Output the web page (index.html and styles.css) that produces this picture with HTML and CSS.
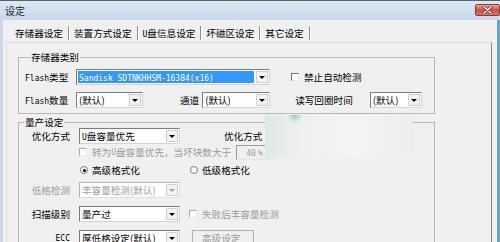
FILE: index.html
```html
<!DOCTYPE html>
<html lang="zh-CN">
<head>
    <meta charset="UTF-8">
    <title>设定</title>
    <link rel="stylesheet" href="styles.css">
</head>
<body>
<div class="window">
    <div class="titlebar">
        <span class="title">设定</span>
        <span class="close-btn">
            <svg width="11" height="8" viewBox="0 0 11 8">
                <path d="M2 1 L9 7 M9 1 L2 7" stroke="#7a2a22" stroke-width="3" stroke-linecap="round"/>
                <path d="M2 1 L9 7 M9 1 L2 7" stroke="#fff" stroke-width="1.6" stroke-linecap="round"/>
            </svg>
        </span>
    </div>
    <div class="client">
        <div class="tabs">
            <span class="tab active">存储器设定</span>
            <span class="tab">装置方式设定</span>
            <span class="tab"><span class="en">U</span>盘信息设定</span>
            <span class="tab">坏磁区设定</span>
            <span class="tab">其它设定</span>
        </div>
        <div class="panel">
            <fieldset class="group group-storage">
                <legend>存储器类别</legend>
                <div class="row row-first">
                    <span class="lbl"><span class="en">Flash</span>类型</span>
                    <div class="combo combo-type">
                        <span class="value selected"><span class="en">Sandisk SDTNKHHSM-16384(x16)</span></span>
                        <span class="arrow"></span>
                    </div>
                    <span class="check check-auto"><span class="box"></span>禁止自动检测</span>
                </div>
                <div class="row row-second">
                    <span class="lbl"><span class="en">Flash</span>数量</span>
                    <div class="combo combo-count">
                        <span class="value">(默认)</span>
                        <span class="arrow"></span>
                    </div>
                    <span class="lbl-channel">通道</span>
                    <div class="combo combo-channel">
                        <span class="value">(默认)</span>
                        <span class="arrow"></span>
                    </div>
                    <span class="lbl-loop">读写回圈时间</span>
                    <div class="combo combo-loop">
                        <span class="value">(默认)</span>
                        <span class="arrow"></span>
                    </div>
                </div>
            </fieldset>

            <fieldset class="group group-mass">
                <legend>量产设定</legend>
                <div class="row">
                    <span class="lbl-r">优化方式</span>
                    <div class="combo combo-std">
                        <span class="value"><span class="en">U</span>盘容量优先</span>
                        <span class="arrow"></span>
                    </div>
                    <span class="lbl-opt">优化方式</span>
                </div>
                <div class="row row-indent disabled">
                    <span class="check"><span class="box"></span>转为<span class="en">U</span>盘容量优先，当坏块数大于</span>
                    <span class="num-box"><span class="en">40</span> <span class="en">%</span></span>
                </div>
                <div class="row row-indent row-scan">
                    <span class="radio on"><span class="dot"></span>高级格式化</span>
                    <span class="radio radio-low"><span class="dot"></span>低级格式化</span>
                </div>
                <div class="row row-low disabled">
                    <span class="lbl-r">低格检测</span>
                    <div class="combo combo-std">
                        <span class="value">丰容量检测(默认)</span>
                        <span class="arrow"></span>
                    </div>
                </div>
                <div class="row row-level">
                    <span class="lbl-r">扫描级别</span>
                    <div class="combo combo-std">
                        <span class="value">量产过</span>
                        <span class="arrow"></span>
                    </div>
                    <span class="check check-fail disabled"><span class="box"></span>失败后丰容量检测</span>
                </div>
                <div class="row row-ecc">
                    <span class="lbl-r"><span class="en">ECC</span></span>
                    <div class="combo combo-std">
                        <span class="value">厚低格设定(默认)</span>
                        <span class="arrow"></span>
                    </div>
                    <span class="btn disabled">高级设定</span>
                </div>
            </fieldset>
        </div>
    </div>
    <div class="fade"></div>
</div>
</body>
</html>
```

FILE: styles.css
```css
body {
    margin: 0;
    padding: 0;
    width: 500px;
    height: 242px;
    overflow: hidden;
    background: #f0f0f0;
    font-family: "Noto Sans CJK SC", sans-serif;
    font-size: 9.6px;
    color: #000;
}
.window {
    position: relative;
    width: 500px;
    height: 242px;
    box-sizing: border-box;
    border-left: 3px solid #c9d9eb;
    border-right: 3px solid #6aa5c2;
    background: #f0f0f0;
}
.en {
    font-family: "DejaVu Sans Mono", monospace;
    font-size: 8px;
}
.titlebar {
    display: flex;
    align-items: center;
    justify-content: space-between;
    height: 20px;
    margin: 0 -3px;
    padding: 0 3px 0 5px;
    box-sizing: border-box;
    border-top: 1px solid #58626d;
    background: linear-gradient(#dbe7f4, #c6d8ec);
}
.title {
    font-size: 10px;
    color: #1c1c1c;
}
.close-btn {
    display: flex;
    align-items: center;
    justify-content: center;
    width: 25px;
    height: 12px;
    margin-top: -2px;
    margin-right: -3px;
    border: 1px solid #8a3b30;
    border-radius: 2px;
    background: linear-gradient(#e9a89c, #c9503f 50%, #d77663);
    box-sizing: border-box;
}
.tabs {
    display: flex;
    padding: 6px 0 2px 8px;
}
.tab {
    height: 14px;
    line-height: 14px;
    padding: 0 5px 0 4px;
    border-right: 1px solid #8e8e8e;
    box-shadow: 1px 0 0 #fff;
    margin-right: 1px;
}
.panel {
    margin: 0 5px 0 3px;
    height: 200px;
    border-top: 1px solid #dcdcdc;
    border-left: 1px solid #dcdcdc;
    border-right: 1px solid #8a8a8a;
    box-sizing: border-box;
}
.group {
    margin: 0 0 0 11px;
    padding: 0;
    width: 417px;
    box-sizing: border-box;
    border: 1px solid #b8b8b8;
    min-width: 0;
}
.group legend {
    margin-left: 5px;
    padding: 0 1px;
    line-height: 12px;
}
.group-storage {
    margin-top: 8px;
    padding: 0 0 5px 6px;
}
.group-mass {
    margin-top: 2px;
    height: 140px;
}
.row {
    display: flex;
    align-items: center;
    height: 16px;
    white-space: nowrap;
}
.row-first {
    margin-top: 6px;
}
.row-second {
    margin-top: 7px;
}
.lbl {
    width: 51px;
}
.lbl-r {
    width: 51px;
    margin-right: 9px;
    text-align: right;
}
.combo {
    display: flex;
    align-items: stretch;
    height: 16px;
    box-sizing: border-box;
    border: 1px solid;
    border-color: #7c7c7c #d4d4d4 #d4d4d4 #7c7c7c;
    background: #fff;
}
.combo .value {
    flex: 1;
    margin: 1px;
    padding-left: 1px;
    line-height: 12px;
    overflow: hidden;
}
.combo .value.selected {
    background: #3399ff;
    color: #fff;
}
.combo .arrow {
    display: flex;
    align-items: center;
    justify-content: center;
    width: 10px;
    margin: 1px;
    border: 1px solid #cfcfcf;
    background: #f3f3f3;
}
.combo .arrow::after {
    content: "";
    border-left: 3px solid transparent;
    border-right: 3px solid transparent;
    border-top: 3px solid #000;
}
.combo-type {
    width: 194px;
}
.combo-count {
    width: 67px;
}
.combo-channel {
    width: 68px;
}
.combo-loop {
    width: 52px;
}
.combo-std {
    width: 101px;
}
.lbl-channel {
    margin-left: 37px;
    margin-right: 3px;
}
.lbl-loop {
    margin-left: 25px;
    margin-right: 17px;
}
.lbl-opt {
    margin-left: 44px;
}
.check,
.radio {
    display: flex;
    align-items: center;
}
.check .box {
    width: 8px;
    height: 8px;
    margin-right: 5px;
    box-sizing: border-box;
    border: 1px solid;
    border-color: #6e6e6e #e2e2e2 #e2e2e2 #6e6e6e;
    background: #fff;
}
.check-auto {
    margin-left: 21px;
}
.check-fail {
    margin-left: 9px;
}
.row-indent {
    padding-left: 60px;
}
.disabled {
    color: #9c9c9c;
}
.disabled .check .box,
.check.disabled .box {
    border-color: #a8a8a8 #ececec #ececec #a8a8a8;
}
.disabled .combo {
    border-color: #b4b4b4 #e0e0e0 #e0e0e0 #b4b4b4;
}
.disabled .combo .arrow::after {
    border-top-color: #a0a0a0;
}
.num-box {
    width: 38px;
    height: 15px;
    margin-left: 5px;
    padding-left: 9px;
    box-sizing: border-box;
    line-height: 13px;
    border: 1px solid;
    border-color: #9a9a9a #e4e4e4 #e4e4e4 #9a9a9a;
}
.row-scan {
    margin-top: 2px;
}
.radio .dot {
    position: relative;
    width: 8px;
    height: 8px;
    margin-right: 4px;
    box-sizing: border-box;
    border: 1px solid #7a7a7a;
    border-radius: 50%;
    background: #fff;
}
.radio.on .dot::after {
    content: "";
    position: absolute;
    left: 1.5px;
    top: 1.5px;
    width: 3px;
    height: 3px;
    border-radius: 50%;
    background: #000;
}
.radio:first-child {
    margin-left: 1px;
}
.radio-low {
    margin-left: 50px;
}
.row-low {
    margin-top: 4px;
}
.row-level {
    margin-top: 8px;
}
.row-ecc {
    margin-top: 8px;
    align-items: flex-start;
}
.btn {
    margin-left: 12px;
    width: 62px;
    height: 16px;
    box-sizing: border-box;
    padding-left: 9px;
    line-height: 14px;
    border: 1px solid #b0b0b0;
    background: #f0f0f0;
}
.fade {
    position: absolute;
    left: 262px;
    top: 115px;
    width: 148px;
    height: 43px;
    background:
        radial-gradient(circle at 30px 0, rgba(110, 190, 170, 0.7) 0, rgba(110, 190, 170, 0) 8px),
        linear-gradient(90deg, #dce9e4, #eef1f0 25%, #f4f4f4 60%, #eceeee);
}
```
